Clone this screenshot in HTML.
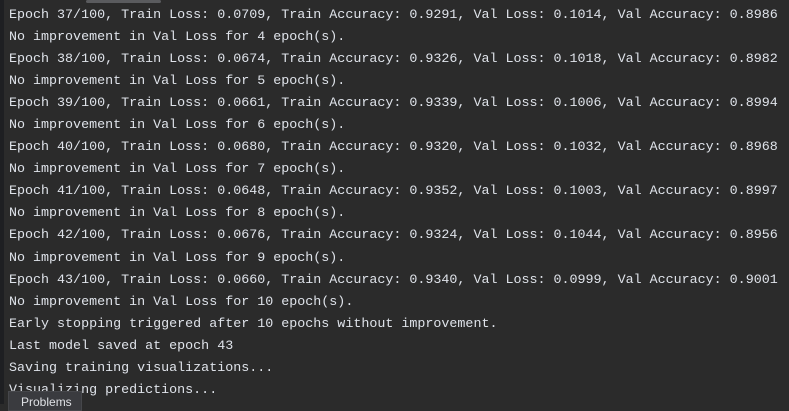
<!DOCTYPE html>
<html><head><style>
html,body{margin:0;padding:0;}
body{width:789px;height:404px;overflow:hidden;background:#2b2b2b;position:relative;}
.g{position:absolute;left:0;top:0;width:4px;height:404px;background:#1e1f22;}
.sb{position:absolute;left:86px;top:0;width:75px;height:3px;background:#5a5b5e;border-radius:2px;}
pre{position:absolute;left:9px;top:5px;margin:0;font-family:"Liberation Mono",monospace;font-size:13.35px;line-height:22.05px;color:#dfe3ea;}
.tip{position:absolute;left:8px;top:391px;width:74px;height:20px;background:#3a3b3f;border:1px solid #46474b;box-sizing:border-box;font-family:"Liberation Sans",sans-serif;font-size:12px;color:#dfe1e5;padding:3px 0 0 12px;}
</style></head><body>
<div class="g"></div><div class="sb"></div>
<pre>Epoch 37/100, Train Loss: 0.0709, Train Accuracy: 0.9291, Val Loss: 0.1014, Val Accuracy: 0.8986
No improvement in Val Loss for 4 epoch(s).
Epoch 38/100, Train Loss: 0.0674, Train Accuracy: 0.9326, Val Loss: 0.1018, Val Accuracy: 0.8982
No improvement in Val Loss for 5 epoch(s).
Epoch 39/100, Train Loss: 0.0661, Train Accuracy: 0.9339, Val Loss: 0.1006, Val Accuracy: 0.8994
No improvement in Val Loss for 6 epoch(s).
Epoch 40/100, Train Loss: 0.0680, Train Accuracy: 0.9320, Val Loss: 0.1032, Val Accuracy: 0.8968
No improvement in Val Loss for 7 epoch(s).
Epoch 41/100, Train Loss: 0.0648, Train Accuracy: 0.9352, Val Loss: 0.1003, Val Accuracy: 0.8997
No improvement in Val Loss for 8 epoch(s).
Epoch 42/100, Train Loss: 0.0676, Train Accuracy: 0.9324, Val Loss: 0.1044, Val Accuracy: 0.8956
No improvement in Val Loss for 9 epoch(s).
Epoch 43/100, Train Loss: 0.0660, Train Accuracy: 0.9340, Val Loss: 0.0999, Val Accuracy: 0.9001
No improvement in Val Loss for 10 epoch(s).
Early stopping triggered after 10 epochs without improvement.
Last model saved at epoch 43
Saving training visualizations...
Visualizing predictions...</pre>
<div class="tip">Problems</div>
</body></html>
